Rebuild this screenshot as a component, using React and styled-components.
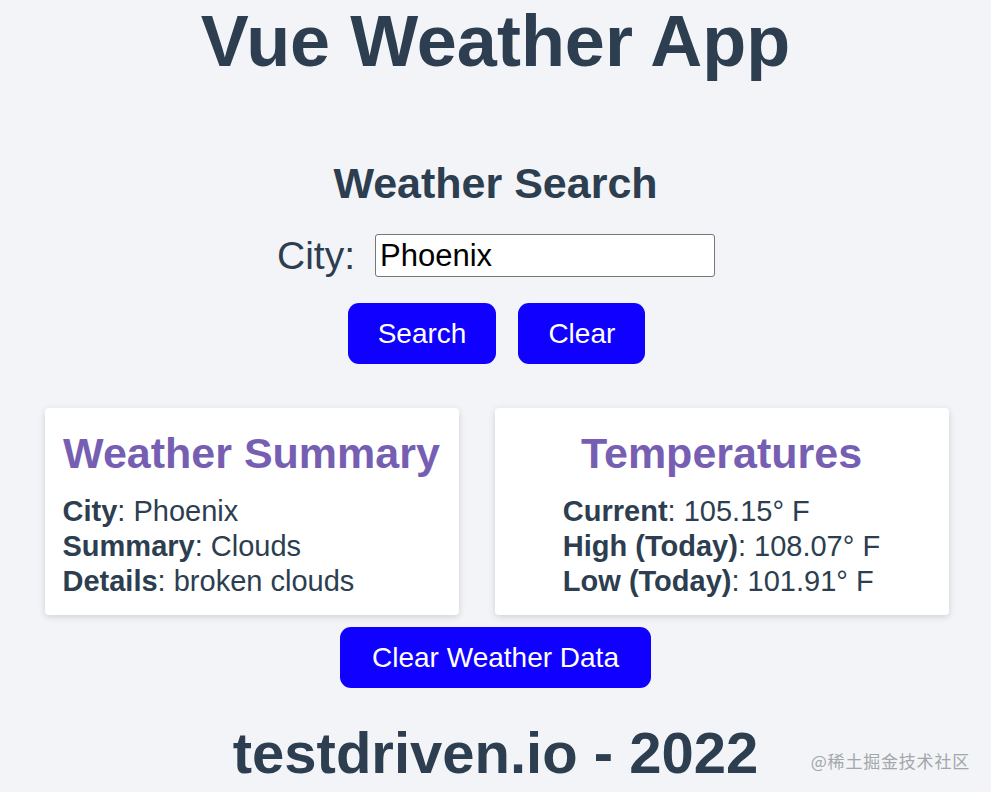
import React, { useState } from 'react'
import styled, { createGlobalStyle } from 'styled-components'

const GlobalStyle = createGlobalStyle`
  html, body {
    margin: 0;
    padding: 0;
    background-color: #f2f4f7;
  }
  body {
    font-family: "Liberation Sans", Arial, Helvetica, sans-serif;
    color: #2c3e50;
  }
`

const Page = styled.div`
  min-height: 792px;
  display: flex;
  flex-direction: column;
  align-items: center;
  text-align: center;
  position: relative;
`

const Title = styled.h1`
  margin: 0;
  font-size: 72px;
  font-weight: bold;
  line-height: 83px;
`

const SearchSection = styled.section`
  margin-top: 75px;
  display: flex;
  flex-direction: column;
  align-items: center;
`

const SectionTitle = styled.h2`
  margin: 0;
  font-size: 43px;
  font-weight: bold;
  line-height: 50px;
`

const CityRow = styled.div`
  margin-top: 26px;
  display: flex;
  align-items: center;
  gap: 20px;
  margin-left: 1px;
`

const Label = styled.label`
  font-size: 39px;
  line-height: 43px;
`

const CityInput = styled.input`
  box-sizing: border-box;
  width: 340px;
  height: 43px;
  padding: 0 4px;
  border: 1px solid #767676;
  border-radius: 3px;
  background: #fff;
  color: #000;
  font-family: "Liberation Sans", Arial, sans-serif;
  font-size: 31px;
`

const ButtonRow = styled.div`
  margin-top: 26px;
  display: flex;
  gap: 22px;
  margin-left: 2px;
`

const BlueButton = styled.button`
  box-sizing: border-box;
  height: 61px;
  padding: 0 ${(props) => props.pad || 30}px;
  border: none;
  border-radius: 11px;
  background-color: #1000ff;
  color: #fff;
  font-family: "Liberation Sans", Arial, sans-serif;
  font-size: 28px;
  cursor: pointer;
`

const CardRow = styled.div`
  margin-top: 44px;
  margin-left: 2px;
  display: flex;
  gap: 36px;
`

const Card = styled.div`
  box-sizing: border-box;
  width: ${(props) => props.width}px;
  height: 207px;
  padding: 21px 18px 0;
  background: #fff;
  border-radius: 4px;
  box-shadow: 0 2px 7px rgba(0, 0, 0, 0.14);
  display: flex;
  flex-direction: column;
  align-items: center;
`

const CardTitle = styled.h3`
  margin: 0 0 16px;
  font-size: 43px;
  font-weight: bold;
  line-height: 49px;
  color: #765fb3;
`

const InfoList = styled.div`
  align-self: ${(props) => (props.centered ? 'center' : 'stretch')};
  text-align: left;
  font-size: 29px;
  line-height: 35px;
`

const InfoLine = styled.div`
  white-space: nowrap;
`

const ClearDataRow = styled.div`
  margin-top: 12px;
`

const Footer = styled.footer`
  margin-top: 32px;
  font-size: 58px;
  font-weight: bold;
  line-height: 66px;
`

const Watermark = styled.div`
  position: absolute;
  right: 21px;
  top: 748px;
  font-family: "Noto Sans CJK SC", "Liberation Sans", sans-serif;
  font-size: 17px;
  color: #a3a6ab;
  letter-spacing: 0.8px;
`

const summary = [
  ['City', 'Phoenix'],
  ['Summary', 'Clouds'],
  ['Details', 'broken clouds'],
]

const temps = [
  ['Current', '105.15° F'],
  ['High (Today)', '108.07° F'],
  ['Low (Today)', '101.91° F'],
]

const App = () => {
  const [city, setCity] = useState('Phoenix')

  const renderLines = (rows) =>
    rows.map(([key, value]) => (
      <InfoLine key={key}>
        <b>{key}</b>: {value}
      </InfoLine>
    ))

  return (
    <Page>
      <GlobalStyle />
      <Title>Vue Weather App</Title>
      <SearchSection>
        <SectionTitle>Weather Search</SectionTitle>
        <CityRow>
          <Label htmlFor="city">City:</Label>
          <CityInput id="city" value={city} onChange={(e) => setCity(e.target.value)} />
        </CityRow>
        <ButtonRow>
          <BlueButton>Search</BlueButton>
          <BlueButton>Clear</BlueButton>
        </ButtonRow>
      </SearchSection>
      <CardRow>
        <Card width={414}>
          <CardTitle>Weather Summary</CardTitle>
          <InfoList>{renderLines(summary)}</InfoList>
        </Card>
        <Card width={454}>
          <CardTitle>Temperatures</CardTitle>
          <InfoList centered>{renderLines(temps)}</InfoList>
        </Card>
      </CardRow>
      <ClearDataRow>
        <BlueButton pad={32}>Clear Weather Data</BlueButton>
      </ClearDataRow>
      <Footer>testdriven.io - 2022</Footer>
      <Watermark>@稀土掘金技术社区</Watermark>
    </Page>
  )
}

export default App
